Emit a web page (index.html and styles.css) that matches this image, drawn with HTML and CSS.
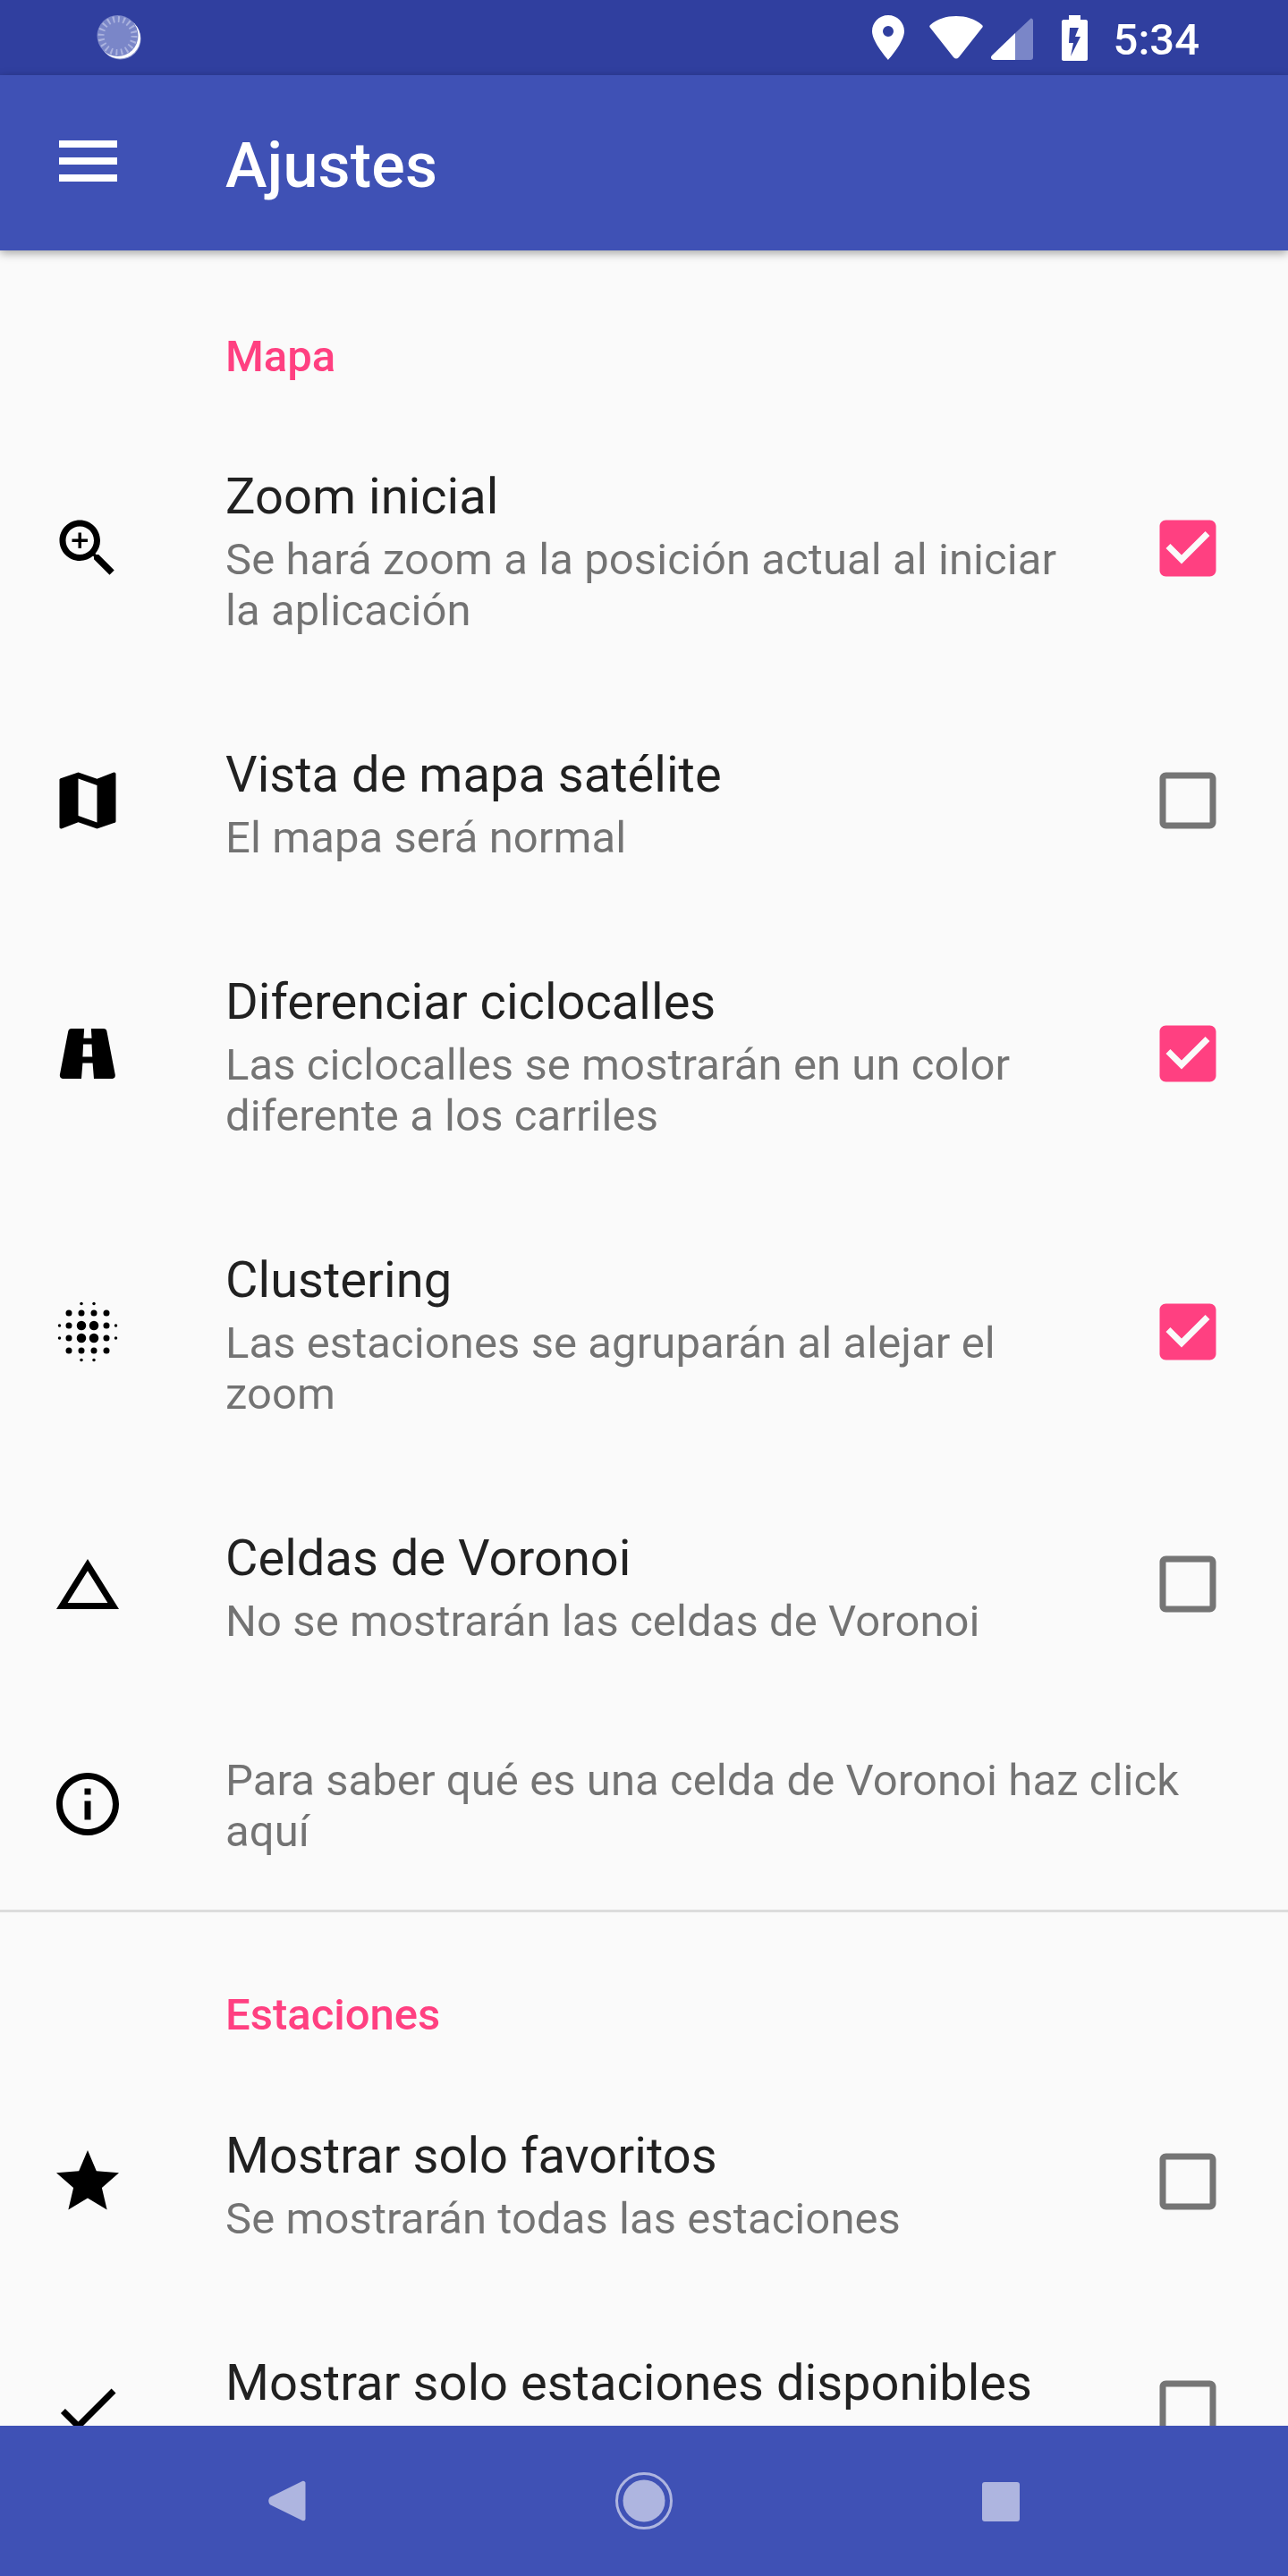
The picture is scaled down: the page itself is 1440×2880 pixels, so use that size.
FILE: index.html
```html
<!DOCTYPE html>
<html lang="es">
<head>
<meta charset="utf-8">
<title>Ajustes</title>
<link rel="stylesheet" href="styles.css">
</head>
<body>
<div class="screen">
  <header class="status">
    <svg class="st-sync" viewBox="0 0 50 50">
      <circle cx="26.5" cy="26.5" r="23" fill="#8f99d0"/>
      <circle cx="26" cy="25.5" r="23" fill="#fff"/>
      <circle cx="23.5" cy="23" r="23" fill="#7a86c8"/>
      <circle cx="23.5" cy="23" r="18.5" fill="none" stroke="#aab2de" stroke-width="7" stroke-dasharray="2 3.8"/>
    </svg>
    <div class="st-right">
      <svg class="st-pin" viewBox="0 0 36 50"><path fill="#fff" fill-rule="evenodd" d="M18 0C8 0 0 8 0 18c0 12 18 32 18 32s18-20 18-32C36 8 28 0 18 0zm0 12a6 6 0 1 1 0 12 6 6 0 0 1 0-12z"/></svg>
      <svg class="st-wifi" viewBox="0 0 60 48"><path fill="#fff" d="M30 0C19 0 9 3 1 10c-1 1-1 2 0 3l26 33c2 2 4 2 6 0l26-33c1-1 1-2 0-3C51 3 41 0 30 0z"/></svg>
      <svg class="st-signal" viewBox="0 0 47 47">
        <path fill="#7a86c8" d="M27 17 44 1c1-1 3 0 3 2v41c0 2-1 3-3 3H27z"/>
        <path fill="#fff" d="M27 17v30H3c-3 0-4-3-2-5z"/>
      </svg>
      <svg class="st-batt" viewBox="0 0 29 51"><path fill="#fff" fill-rule="evenodd" d="M8 0h13v5h6c1 0 2 1 2 2v42c0 1-1 2-2 2H2c-1 0-2-1-2-2V7c0-1 1-2 2-2h6zm1 14-1 17h5l-3 15 11-22h-6l4-10z"/></svg>
      <span class="st-time">5:34</span>
    </div>
  </header>

  <div class="toolbar">
    <svg class="tb-menu" viewBox="0 0 84 84"><path fill="#fff" d="M10 17h65v8H10zM10 36h65v8H10zM10 55h65v8H10z"/></svg>
    <h1 class="tb-title">Ajustes</h1>
  </div>

  <main class="content">
    <section class="group">
      <h2 class="group-title">Mapa</h2>
      <div class="row">
        <svg class="icon" viewBox="0 0 24 24"><path d="M15.5 14h-.79l-.28-.27C15.41 12.59 16 11.11 16 9.5 16 5.91 13.09 3 9.5 3S3 5.91 3 9.5 5.91 16 9.5 16c1.61 0 3.09-.59 4.23-1.57l.27.28v.79l5 4.99L20.49 19l-4.99-5zm-6 0C7.01 14 5 11.99 5 9.5S7.01 5 9.5 5 14 7.01 14 9.5 11.99 14 9.5 14zm2.5-4h-2v2H9v-2H7V9h2V7h1v2h2v1z"/></svg>
        <div class="text">
          <div class="title">Zoom inicial</div>
          <div class="summary">Se hará zoom a la posición actual al iniciar la aplicación</div>
        </div>
        <svg class="check on" viewBox="0 0 24 24"><path d="M19 3H5c-1.11 0-2 .9-2 2v14c0 1.1.89 2 2 2h14c1.1 0 2-.9 2-2V5c0-1.11-.89-2-2-2zm-9 14l-5-5 1.41-1.41L10 14.17l7.59-7.59L19 8l-9 9z"/></svg>
      </div>
      <div class="row">
        <svg class="icon" viewBox="0 0 24 24"><path d="M20.5 3l-.16.03L15 5.1 9 3 3.36 4.9c-.21.07-.36.25-.36.48V20.5c0 .28.22.5.5.5l.16-.03L9 18.9l6 2.1 5.64-1.9c.21-.07.36-.25.36-.48V3.5c0-.28-.22-.5-.5-.5zM15 19l-6-2.11V5l6 2.11V19z"/></svg>
        <div class="text">
          <div class="title">Vista de mapa satélite</div>
          <div class="summary">El mapa será normal</div>
        </div>
        <svg class="check" viewBox="0 0 24 24"><path d="M19 5v14H5V5h14m0-2H5c-1.1 0-2 .9-2 2v14c0 1.1.9 2 2 2h14c1.1 0 2-.9 2-2V5c0-1.1-.9-2-2-2z"/></svg>
      </div>
      <div class="row">
        <svg class="icon" viewBox="0 0 24 24"><path fill-rule="evenodd" d="M18.1 4.8C18 4.3 17.6 4 17.1 4H13.1L13.3 7.1H10.7L10.9 4H6.8C6.3 4 5.9 4.4 5.8 4.8L3.1 18.8C3 19.4 3.5 20 4 20H10L10.4 15H13.6L14 20H19.9C20.5 20 20.9 19.4 20.8 18.8L18.1 4.8ZM10.6 9H13.3L13.5 13H10.4Z"/></svg>
        <div class="text">
          <div class="title">Diferenciar ciclocalles</div>
          <div class="summary">Las ciclocalles se mostrarán en un color diferente a los carriles</div>
        </div>
        <svg class="check on" viewBox="0 0 24 24"><path d="M19 3H5c-1.11 0-2 .9-2 2v14c0 1.1.89 2 2 2h14c1.1 0 2-.9 2-2V5c0-1.11-.89-2-2-2zm-9 14l-5-5 1.41-1.41L10 14.17l7.59-7.59L19 8l-9 9z"/></svg>
      </div>
      <div class="row">
        <svg class="icon" viewBox="0 0 24 24">
          <circle cx="10" cy="3" r=".5"/><circle cx="14" cy="3" r=".5"/>
          <circle cx="6" cy="6" r="1"/><circle cx="10" cy="6" r="1"/><circle cx="14" cy="6" r="1"/><circle cx="18" cy="6" r="1"/>
          <circle cx="3" cy="10" r=".5"/><circle cx="6" cy="10" r="1"/><circle cx="10" cy="10" r="1.5"/><circle cx="14" cy="10" r="1.5"/><circle cx="18" cy="10" r="1"/><circle cx="21" cy="10" r=".5"/>
          <circle cx="3" cy="14" r=".5"/><circle cx="6" cy="14" r="1"/><circle cx="10" cy="14" r="1.5"/><circle cx="14" cy="14" r="1.5"/><circle cx="18" cy="14" r="1"/><circle cx="21" cy="14" r=".5"/>
          <circle cx="6" cy="18" r="1"/><circle cx="10" cy="18" r="1"/><circle cx="14" cy="18" r="1"/><circle cx="18" cy="18" r="1"/>
          <circle cx="10" cy="21" r=".5"/><circle cx="14" cy="21" r=".5"/>
        </svg>
        <div class="text">
          <div class="title">Clustering</div>
          <div class="summary">Las estaciones se agruparán al alejar el zoom</div>
        </div>
        <svg class="check on" viewBox="0 0 24 24"><path d="M19 3H5c-1.11 0-2 .9-2 2v14c0 1.1.89 2 2 2h14c1.1 0 2-.9 2-2V5c0-1.11-.89-2-2-2zm-9 14l-5-5 1.41-1.41L10 14.17l7.59-7.59L19 8l-9 9z"/></svg>
      </div>
      <div class="row">
        <svg class="icon" viewBox="0 0 24 24"><path d="M12 7.77L18.39 18H5.61L12 7.77M12 4L2 20h20L12 4z"/></svg>
        <div class="text">
          <div class="title">Celdas de Voronoi</div>
          <div class="summary">No se mostrarán las celdas de Voronoi</div>
        </div>
        <svg class="check" viewBox="0 0 24 24"><path d="M19 5v14H5V5h14m0-2H5c-1.1 0-2 .9-2 2v14c0 1.1.9 2 2 2h14c1.1 0 2-.9 2-2V5c0-1.1-.9-2-2-2z"/></svg>
      </div>
      <div class="row row-info">
        <svg class="icon" viewBox="0 0 24 24"><path d="M11 17h2v-6h-2v6zm1-15C6.48 2 2 6.48 2 12s4.48 10 10 10 10-4.48 10-10S17.52 2 12 2zm0 18c-4.41 0-8-3.59-8-8s3.59-8 8-8 8 3.59 8 8-3.59 8-8 8zm-1-11h2V7h-2v2z"/></svg>
        <div class="text">
          <div class="summary">Para saber qué es una celda de Voronoi haz click aquí</div>
        </div>
      </div>
    </section>
    <section class="group group-second">
      <h2 class="group-title">Estaciones</h2>
      <div class="row">
        <svg class="icon" viewBox="0 0 24 24"><path d="M12 17.27L18.18 21l-1.64-7.03L22 9.24l-7.19-.61L12 2 9.19 8.63 2 9.24l5.46 4.73L5.82 21z"/></svg>
        <div class="text">
          <div class="title">Mostrar solo favoritos</div>
          <div class="summary">Se mostrarán todas las estaciones</div>
        </div>
        <svg class="check" viewBox="0 0 24 24"><path d="M19 5v14H5V5h14m0-2H5c-1.1 0-2 .9-2 2v14c0 1.1.9 2 2 2h14c1.1 0 2-.9 2-2V5c0-1.1-.9-2-2-2z"/></svg>
      </div>
      <div class="row row-cut">
        <svg class="icon" viewBox="0 0 24 24"><path d="M9 16.17L4.83 12l-1.42 1.41L9 19 21 7l-1.41-1.41z"/></svg>
        <div class="text">
          <div class="title">Mostrar solo estaciones disponibles</div>
        </div>
        <svg class="check" viewBox="0 0 24 24"><path d="M19 5v14H5V5h14m0-2H5c-1.1 0-2 .9-2 2v14c0 1.1.9 2 2 2h14c1.1 0 2-.9 2-2V5c0-1.1-.9-2-2-2z"/></svg>
      </div>
    </section>
  </main>

  <nav class="navbar">
    <svg class="nav-icon" viewBox="0 0 84 84"><path fill="#aeb5e0" d="M23.500 37.500 59 20c1.500-.8 3.500.2 3.500 2v40c0 1.800-2 2.800-3.500 2L23.500 46.500c-3-1.800-3-7.200 0-9z"/></svg>
    <svg class="nav-icon" viewBox="0 0 84 84"><circle cx="42" cy="42" r="30.500" fill="none" stroke="#aeb5e0" stroke-width="3"/><circle cx="42" cy="42" r="23.500" fill="#aeb5e0"/></svg>
    <svg class="nav-icon" viewBox="0 0 84 84"><rect x="21" y="21" width="42" height="44" rx="3" fill="#aeb5e0"/></svg>
  </nav>
</div>
</body>
</html>
```
FILE: styles.css
```css
* { box-sizing: border-box; }
html, body { margin: 0; padding: 0; }
body { background: #fafafa; font-family: Roboto, "Noto Sans", sans-serif; }
.screen { width: 1440px; height: 2880px; display: flex; flex-direction: column; overflow: hidden; }

.status { flex: none; height: 84px; background: #303f9f; display: flex; align-items: center; justify-content: space-between; padding: 0 99px 0 108px; }
.st-sync { width: 50px; height: 50px; }
.st-right { display: flex; align-items: center; }
.st-pin { width: 36px; height: 50px; margin-right: 28px; }
.st-wifi { width: 60px; height: 48px; margin-right: 9px; }
.st-signal { width: 47px; height: 47px; margin-right: 32px; margin-top: 3px; }
.st-batt { width: 29px; height: 51px; margin-right: 29px; }
.st-time { color: #fff; font-size: 49px; line-height: 57px; font-weight: 500; margin-top: 4px; }

.toolbar { position: relative; z-index: 1; flex: none; height: 196px; background: #3f51b5; display: flex; align-items: center; padding-left: 56px; box-shadow: 0 3px 10px rgba(0,0,0,.35); }
.tb-menu { width: 84px; height: 84px; margin-right: 112px; }
.tb-title { margin: 6px 0 0; color: #fff; font-size: 70px; line-height: 84px; font-weight: 500; letter-spacing: .2px; }

.content { flex: 1; min-height: 0; overflow: hidden; background: #fafafa; }
.group-title { margin: 0; height: 177px; padding: 90px 0 0 252px; font-size: 49px; line-height: 57px; font-weight: 500; color: #ff4081; }
.group-second { border-top: 3px solid #dcdcdc; }
.group-second .group-title { height: 174px; padding-top: 86px; }

.row { display: flex; align-items: center; min-height: 254px; padding: 57px 70px 57px 56px; }
.row-info { min-height: 237px; }
.row-cut { align-items: flex-start; }
.row-cut .icon, .row-cut .check { margin-top: 28px; }
.icon { flex: none; width: 84px; height: 84px; margin-right: 112px; fill: #000; }
.text { flex: 1; min-width: 0; padding: 8px 70px 0 0; }
.row-info .text { padding: 5px 0 0; }
.title { font-size: 56px; line-height: 66px; color: rgba(0,0,0,.87); margin-bottom: 9px; letter-spacing: .03px; }
.summary { font-size: 49px; line-height: 57px; color: rgba(0,0,0,.54); letter-spacing: .08px; }
.check { flex: none; width: 84px; height: 84px; fill: #757575; }
.check.on { fill: #ff4081; }

.navbar { flex: none; height: 168px; background: #3f51b5; display: flex; align-items: center; justify-content: center; gap: 315px; position: relative; z-index: 1; }
.nav-icon { width: 84px; height: 84px; }
```
